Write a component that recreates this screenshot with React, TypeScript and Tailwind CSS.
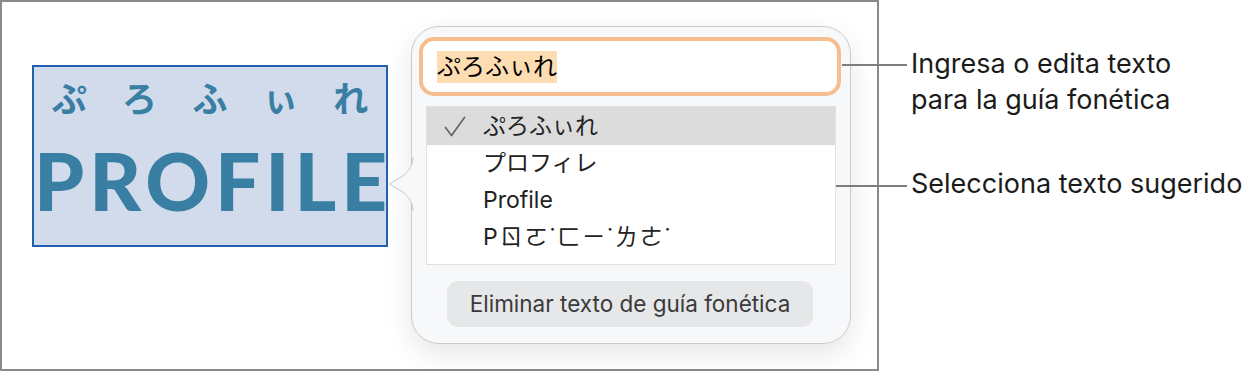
import React from "react";

const sans = "font-['Inter','Noto_Sans_CJK_JP',sans-serif]";

const suggestions = ["ぷろふぃれ", "プロフィレ", "Profile", "Pㄖㄛ˙ㄈㄧ˙ㄌㄜ˙"];

const Arrow: React.FC = () => (
  <svg
    className="absolute left-[-26px] top-[130px]"
    width="28"
    height="54"
    viewBox="0 0 28 54"
  >
    <path
      d="M27 0 C27 10 21 16 15 20 L3 27 L15 34 C21 38 27 44 27 54 Z"
      fill="#f7f8fa"
    />
    <path
      d="M27 0 C27 10 21 16 15 20 L3 27 L15 34 C21 38 27 44 27 54"
      fill="none"
      stroke="#c9c9c9"
      strokeWidth="1"
    />
  </svg>
);

const App: React.FC = () => {
  return (
    <div className={`flex w-[1248px] h-[372px] bg-white ${sans}`}>
      {/* frame */}
      <div className="w-[879px] h-[371px] border-2 border-[#8a8a8a] flex items-start pl-[30px]">
        {/* text box with ruby */}
        <div className="mt-[63px] w-[356px] h-[182px] border-2 border-[#2161ad] bg-[#d1dbec] text-[#387fa3]">
          <div className="grid grid-cols-5 mt-[8px] text-[35px] leading-[44px] font-bold font-['Noto_Sans_CJK_JP',sans-serif]">
            <span className="text-center">ぷ</span>
            <span className="text-center">ろ</span>
            <span className="text-center">ふ</span>
            <span className="text-center">ぃ</span>
            <span className="text-center">れ</span>
          </div>
          <div className="mt-[18px] text-center text-[80px] leading-[86px] font-black tracking-[5px] font-['Lato',sans-serif]">
            PROFILE
          </div>
        </div>

        {/* popover */}
        <div className="relative ml-[23px] mt-[24px] w-[440px] h-[318px] rounded-[28px] border border-[#cbcbcb] bg-[#f7f8fa] shadow-[0_10px_28px_rgba(0,0,0,0.10)] pt-[10px] pl-[7px] pr-[9px]">
          <Arrow />
          <div className="h-[59px] rounded-[15px] border-[4px] border-[#f6bd8e] bg-white flex items-center pl-[14px]">
            <span className="bg-[#fedcb2] text-[24px] leading-[32px] text-black">ぷろふぃれ</span>
          </div>
          <div className="mt-[10px] ml-[7px] mr-[5px] border border-[#e1e1e1] bg-white pb-[8px]">
            {suggestions.map((s, i) => (
              <div
                key={i}
                className={`flex items-center ${i === 0 ? "h-[38px] bg-[#dcdcdc]" : "h-[37px]"}`}
              >
                <div className="w-[56px] flex justify-center">
                  {i === 0 && (
                    <svg width="22" height="21" viewBox="0 0 22 21">
                      <path d="M1.5 11.5 L7.5 19.5 L20.5 1.5" fill="none" stroke="#666" strokeWidth="1.7" strokeLinecap="round" strokeLinejoin="round" />
                    </svg>
                  )}
                </div>
                <span className={`text-[23px] text-[#222] ${i === 3 ? "tracking-[2px]" : ""}`}>{s}</span>
              </div>
            ))}
          </div>
          <div className="mt-[16px] mx-auto w-[366px] h-[46px] rounded-[11px] bg-[#e6e7e8] flex items-center justify-center text-[22.5px] text-[#3a3a3a]">
            Eliminar texto de guía fonética
          </div>
        </div>
      </div>

      {/* callouts */}
      <div className="relative flex-1 pl-[32px] text-[27px] text-[#1b1b1b]">
        <div className="absolute left-[-37px] top-[64px] w-[65px] h-[2px] bg-[#7d7d7d]" />
        <div className="absolute left-[-43px] top-[185px] w-[71px] h-[2px] bg-[#7d7d7d]" />
        <div className="mt-[46px] leading-[36px]">
          Ingresa o edita texto
          <br />
          para la guía fonética
        </div>
        <div className="mt-[48px] leading-[36px]">Selecciona texto sugerido</div>
      </div>
    </div>
  );
};

export default App;
